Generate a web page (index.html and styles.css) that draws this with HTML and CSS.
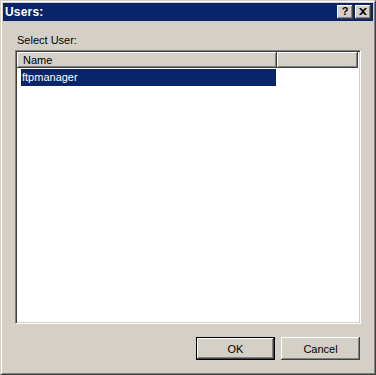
FILE: index.html
```html
<!DOCTYPE html>
<html lang="en">
<head>
  <meta charset="UTF-8">
  <title>Users:</title>
  <link rel="stylesheet" href="styles.css">
</head>
<body>
  <div class="window">
    <div class="title-bar">
      <span class="title">Users:</span>
      <div class="title-buttons">
        <button class="title-btn help-btn">?</button>
        <button class="title-btn close-btn">
          <svg width="8" height="7" viewBox="0 0 8 7">
            <path d="M0 0h2l2 2l2-2h2l-3 3.5l3 3.5h-2l-2-2l-2 2h-2l3-3.5z" fill="#000"/>
          </svg>
        </button>
      </div>
    </div>

    <div class="content">
      <div class="label">Select User:</div>

      <div class="list-view">
        <div class="list-header">
          <div class="col-header col-name">Name</div>
          <div class="col-header col-extra"></div>
        </div>
        <div class="list-body">
          <div class="list-row selected">ftpmanager</div>
        </div>
      </div>

      <div class="actions">
        <button class="btn default-btn">OK</button>
        <button class="btn">Cancel</button>
      </div>
    </div>
  </div>
</body>
</html>
```

FILE: styles.css
```css
* {
  margin: 0;
  padding: 0;
  box-sizing: border-box;
}

body {
  background: #d4d0c8;
  font-family: 'Liberation Sans', Arial, sans-serif;
  font-size: 11px;
  color: #000;
}

.window {
  width: 376px;
  height: 375px;
  background: #d4d0c8;
  border-top: 1px solid #d4d0c8;
  border-left: 1px solid #d4d0c8;
  border-right: 1px solid #404040;
  border-bottom: 1px solid #404040;
  box-shadow: inset 1px 1px #fff, inset -1px -1px #808080;
  padding: 2px;
  display: flex;
  flex-direction: column;
}

/* title bar */
.title-bar {
  height: 18px;
  background: #0a246a;
  display: flex;
  align-items: center;
  justify-content: space-between;
  padding: 0 2px 0 2px;
}

.title {
  color: #fff;
  font-weight: bold;
  font-size: 12px;
  letter-spacing: 0.2px;
}

.title-buttons {
  display: flex;
  gap: 2px;
}

.title-btn {
  width: 16px;
  height: 14px;
  border: none;
  background: #d4d0c8;
  box-shadow: inset -1px -1px #404040, inset 1px 1px #fff, inset -2px -2px #808080;
  display: flex;
  align-items: center;
  justify-content: center;
  font-family: 'Liberation Sans', Arial, sans-serif;
  font-weight: bold;
  font-size: 11px;
  line-height: 1;
  padding-bottom: 1px;
}

/* content */
.content {
  flex: 1;
  display: flex;
  flex-direction: column;
  padding: 13px 12px 12px 12px;
}

.label {
  line-height: 13px;
  margin-left: 2px;
  margin-bottom: 3px;
}

.list-view {
  flex: 1;
  background: #fff;
  border-top: 1px solid #808080;
  border-left: 1px solid #808080;
  border-right: 1px solid #fff;
  border-bottom: 1px solid #fff;
  box-shadow: inset 1px 1px #404040, inset -1px -1px #d4d0c8;
  padding: 1px;
  display: flex;
  flex-direction: column;
}

.list-header {
  display: flex;
  height: 16px;
  margin-right: 1px;
}

.col-header {
  background: #d4d0c8;
  box-shadow: inset -1px -1px #404040, inset 1px 1px #fff, inset -2px -2px #808080;
  line-height: 16px;
  padding-left: 6px;
}

.col-name {
  width: 260px;
}

.col-extra {
  flex: 1;
}

.list-body {
  padding: 1px 0 0 4px;
}

.list-row {
  width: 255px;
  height: 17px;
  line-height: 17px;
  padding-left: 1px;
  font-size: 11px;
}

.list-row.selected {
  background: #0a246a;
  color: #fff;
}

/* buttons */
.actions {
  display: flex;
  justify-content: flex-end;
  gap: 6px;
  margin-top: 13px;
  padding-right: 1px;
}

.btn {
  width: 79px;
  height: 23px;
  border: none;
  background: #d4d0c8;
  box-shadow: inset -1px -1px #404040, inset 1px 1px #fff, inset -2px -2px #808080;
  font-family: 'Liberation Sans', Arial, sans-serif;
  font-size: 11px;
  color: #000;
}

.default-btn {
  border: 1px solid #000;
}
```
